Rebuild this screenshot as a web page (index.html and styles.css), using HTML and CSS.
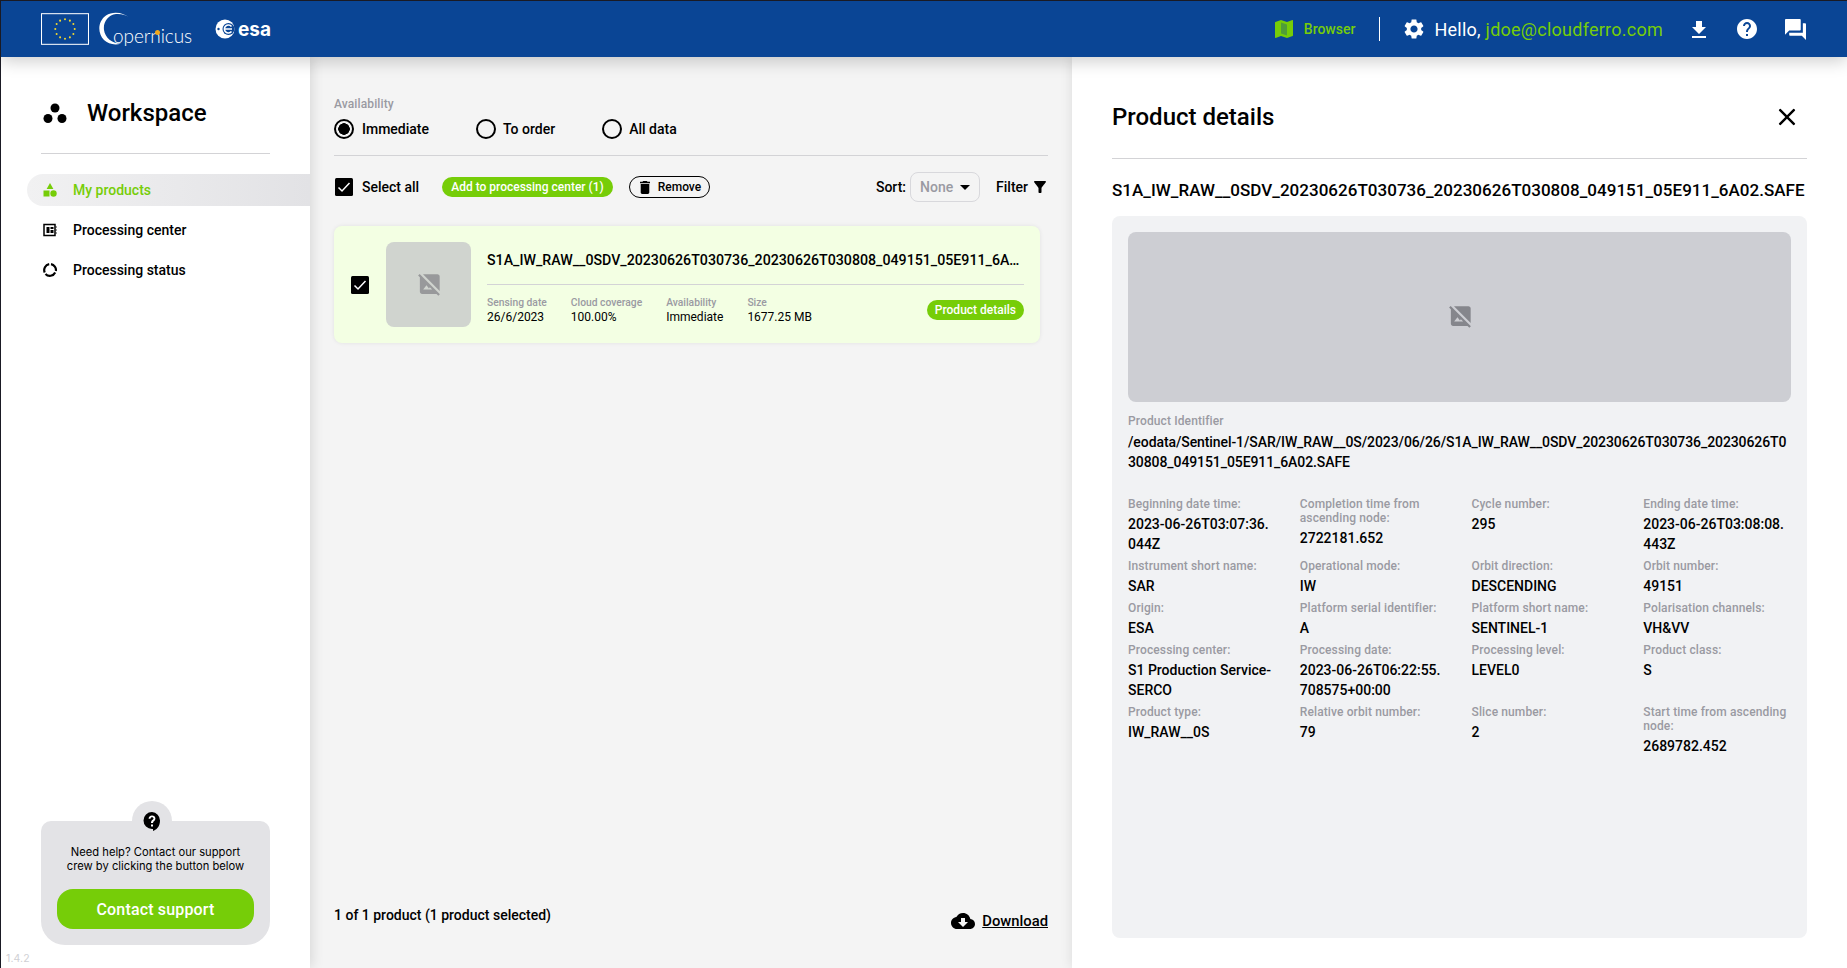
FILE: index.html
```html
<!DOCTYPE html>
<html lang="en">
<head>
  <meta charset="UTF-8">
  <title>Workspace - Product details</title>
  <link rel="stylesheet" href="styles.css">
</head>
<body>

  <!-- top bar -->
  <header class="topbar">
    <div class="logos">
      <svg class="logo-eu" viewBox="0 0 47 31">
        <rect x="0.5" y="0.5" width="46" height="30" fill="#0a4595" stroke="#fff"/>
        <g fill="#f4d92e">
          <circle cx="23.5" cy="6" r="1"/><circle cx="28.3" cy="7.3" r="1"/><circle cx="31.7" cy="10.7" r="1"/>
          <circle cx="33" cy="15.5" r="1"/><circle cx="31.7" cy="20.3" r="1"/><circle cx="28.3" cy="23.7" r="1"/>
          <circle cx="23.5" cy="25" r="1"/><circle cx="18.7" cy="23.7" r="1"/><circle cx="15.3" cy="20.3" r="1"/>
          <circle cx="14" cy="15.5" r="1"/><circle cx="15.3" cy="10.7" r="1"/><circle cx="18.7" cy="7.3" r="1"/>
        </g>
      </svg>
      <div class="logo-copernicus">
        <svg class="copernicus-arc" viewBox="0 0 32 33">
          <path d="M31 6C25 .5 14-1.500 7 3.500-1 9-2 21 5 28c4 4 11 5.500 17 3.500C14 32 6 26 5 18 4 10 9 3 17 2c5-.5 10 1 14 4z" fill="#fff"/>
        </svg>
        <span>opernicus</span>
        <i class="copernicus-dot"></i>
      </div>
      <div class="logo-esa">
        <svg viewBox="0 0 20 20">
          <circle cx="10" cy="10" r="9.500" fill="#fff"/>
          <circle cx="13.500" cy="10" r="6" fill="#0a4595"/>
          <circle cx="3.500" cy="10" r="1.200" fill="#0a4595"/>
          <path d="M9.500 10h7.500M16.500 7.500A4 4 0 1 0 16.500 12.500" fill="none" stroke="#fff" stroke-width="1.600"/>
        </svg>
        <span>esa</span>
      </div>
    </div>
    <div class="top-right">
      <a class="browser-link">
        <svg class="icon-browser" viewBox="3 3 18 18"><path fill="#76cd08" d="M20.500 3l-.16.03L15 5.100 9 3 3.360 4.900c-.21.07-.36.25-.36.480V20.500c0 .28.22.5.5.5l.16-.03L9 18.900l6 2.100 5.640-1.900c.21-.07.36-.25.36-.48V3.500c0-.28-.22-.5-.5-.5z"/><path fill="#0a4595" d="M9 5.500l6 2.100v11l-6-2.100z" opacity=".35"/></svg>
        <span>Browser</span>
      </a>
      <span class="top-sep"></span>
      <svg class="icon-gear" viewBox="2 2 20 20"><path fill="#fff" d="M19.140 12.940c.04-.3.06-.61.06-.94 0-.32-.02-.64-.07-.94l2.030-1.580c.18-.14.23-.41.12-.61l-1.920-3.320c-.12-.22-.37-.29-.59-.22l-2.390.96c-.5-.38-1.030-.7-1.620-.94l-.36-2.540c-.04-.24-.24-.41-.48-.41h-3.840c-.24 0-.43.17-.47.41l-.36 2.540c-.59.24-1.130.57-1.620.94l-2.390-.96c-.22-.08-.47 0-.59.22L2.740 8.870c-.12.21-.08.47.12.61l2.030 1.580c-.05.3-.09.63-.09.94s.02.64.07.94l-2.030 1.580c-.18.14-.23.41-.12.61l1.920 3.320c.12.22.37.29.59.22l2.390-.96c.5.38 1.030.7 1.620.94l.36 2.540c.05.24.24.41.48.41h3.840c.24 0 .44-.17.47-.41l.36-2.540c.59-.24 1.130-.56 1.620-.94l2.390.96c.22.08.47 0 .59-.22l1.920-3.320c.12-.22.07-.47-.12-.61l-2.010-1.580zM12 15.600c-1.980 0-3.600-1.620-3.600-3.600s1.620-3.600 3.600-3.600 3.600 1.620 3.600 3.600-1.620 3.600-3.600 3.600z"/></svg>
      <div class="hello">Hello, <span class="hello-mail">jdoe@cloudferro.com</span></div>
      <svg class="icon-top icon-dl" viewBox="5 3 14 17"><path fill="#fff" d="M19 9h-4V3H9v6H5l7 7 7-7zM5 18v2h14v-2H5z"/></svg>
      <svg class="icon-top icon-help" viewBox="2 2 20 20"><path fill="#fff" d="M12 2C6.480 2 2 6.480 2 12s4.480 10 10 10 10-4.480 10-10S17.520 2 12 2zm1 17h-2v-2h2v2zm2.070-7.750l-.9.92C13.450 12.900 13 13.500 13 15h-2v-.5c0-1.100.45-2.100 1.170-2.830l1.240-1.260c.37-.36.59-.86.59-1.410 0-1.100-.9-2-2-2s-2 .9-2 2H8c0-2.210 1.790-4 4-4s4 1.790 4 4c0 .88-.36 1.680-.93 2.250z"/></svg>
      <svg class="icon-top icon-chat" viewBox="2 2 20 20"><path fill="#fff" d="M21 6h-2v9H6v2c0 .55.45 1 1 1h11l4 4V7c0-.55-.45-1-1-1zm-4 6V3c0-.55-.45-1-1-1H3c-.55 0-1 .45-1 1v14l4-4h10c.55 0 1-.45 1-1z"/></svg>
    </div>
  </header>

  <div class="page">

    <!-- left menu -->
    <aside class="sidebar">
      <div class="side-title">
        <svg class="icon-workspace" viewBox="0 0 24 20">
          <circle cx="12" cy="5" r="4.500"/><circle cx="5" cy="15.500" r="4.500"/><circle cx="19" cy="15.500" r="4.500"/>
        </svg>
        <h2>Workspace</h2>
      </div>
      <nav class="side-nav">
        <a class="nav-item active">
          <svg class="nav-icon" viewBox="0 0 14 14"><path fill="#76cd08" d="M7 0l3.400 6H3.600z"/><rect fill="#76cd08" x="0.500" y="7.500" width="6" height="6"/><circle fill="#76cd08" cx="10.500" cy="10.500" r="3.200"/></svg>
          <span>My products</span>
        </a>
        <a class="nav-item">
          <svg class="nav-icon" viewBox="0 0 14 14"><path d="M1 1.500h11v11H1z" fill="none" stroke="#000" stroke-width="1.500"/><path d="M3.500 4h3v6h-3zM7.500 4h3v2h-3zM7.500 7h3v3h-3z"/><path d="M12.500 4h1.500M12.500 7h1.500M12.500 10h1.500" stroke="#000" stroke-width=".8"/></svg>
          <span>Processing center</span>
        </a>
        <a class="nav-item">
          <svg class="nav-icon" viewBox="0 0 14 14"><path d="M8 1.200A6 6 0 0 1 12.900 8M12.200 9.500A6 6 0 0 1 2.500 11M1.700 9.500A6 6 0 0 1 6.200 1.200" fill="none" stroke="#000" stroke-width="2.200"/></svg>
          <span>Processing status</span>
        </a>
      </nav>
      <div class="help-box">
        <div class="help-bump">
          <svg viewBox="0 0 18 19"><path d="M9 0a8.500 8.500 0 0 0 0 17h1v2c3-1 7-4 7-10.500A8.500 8.500 0 0 0 9 0z"/><path fill="#fff" d="M8 12.500h2v2H8zM9 3.500c-2 0-3.400 1.300-3.400 3.200h1.900c0-.9.6-1.500 1.500-1.500s1.500.6 1.500 1.300c0 1.300-2.500 1.500-2.500 4.500h2c0-2 2.400-2.300 2.400-4.600 0-1.700-1.400-2.900-3.400-2.900z"/></svg>
        </div>
        <p>Need help? Contact our support crew by clicking the button below</p>
        <button class="contact-btn">Contact support</button>
      </div>
      <div class="version">1.4.2</div>
    </aside>

    <!-- product list -->
    <main class="main">
      <div class="field-label">Availability</div>
      <div class="radios">
        <label class="radio checked"><i></i>Immediate</label>
        <label class="radio"><i></i>To order</label>
        <label class="radio"><i></i>All data</label>
      </div>

      <div class="toolbar">
        <svg class="check check-all" viewBox="0 0 18 18"><rect width="18" height="18" rx="1.500"/><path d="M3.500 9.500l3.500 3.500 7.500-8" fill="none" stroke="#fff" stroke-width="1.500"/></svg>
        <span class="select-all">Select all</span>
        <button class="pill pill-add">Add to processing center (1)</button>
        <button class="pill pill-remove">
          <svg viewBox="5 3 14 18"><path d="M6 19c0 1.100.9 2 2 2h8c1.100 0 2-.9 2-2V7H6v12zM19 4h-3.500l-1-1h-5l-1 1H5v2h14V4z"/></svg>
          Remove
        </button>
        <div class="sort">
          <span>Sort:</span>
          <div class="sort-select">None <i class="caret"></i></div>
          <span class="filter">Filter
            <svg viewBox="4 4 16 16"><path d="M4.250 5.610C6.270 8.200 10 13 10 13v6c0 .55.45 1 1 1h2c.55 0 1-.45 1-1v-6s3.720-4.800 5.740-7.390c.51-.66.04-1.610-.79-1.610H5.040c-.83 0-1.300.95-.79 1.610z"/></svg>
          </span>
        </div>
      </div>

      <div class="product-card">
        <svg class="check check-card" viewBox="0 0 18 18"><rect width="18" height="18" rx="1.500"/><path d="M3.500 9.500l3.500 3.500 7.500-8" fill="none" stroke="#fff" stroke-width="1.500"/></svg>
        <div class="thumb">
          <svg viewBox="1.300 2.800 20 20"><path d="M21 5c0-1.100-.9-2-2-2H5.830L21 18.170V5zM2.810 2.810 1.390 4.220 3 5.830V19c0 1.100.9 2 2 2h13.170l1.610 1.610 1.410-1.410L2.810 2.810zM6 17l3-4 2.250 3 .82-1.100 2.100 2.100H6z"/></svg>
        </div>
        <div class="product-body">
          <div class="product-name">S1A_IW_RAW__0SDV_20230626T030736_20230626T030808_049151_05E911_6A02.SAFE</div>
          <div class="product-meta">
            <div class="meta"><span>Sensing date</span>26/6/2023</div>
            <div class="meta"><span>Cloud coverage</span>100.00%</div>
            <div class="meta"><span>Availability</span>Immediate</div>
            <div class="meta"><span>Size</span>1677.25 MB</div>
            <button class="pill pill-details">Product details</button>
          </div>
        </div>
      </div>

      <div class="list-footer">
        <span class="count">1 of 1 product (1 product selected)</span>
        <a class="download">
          <svg viewBox="0 4 24 16"><path d="M19.350 10.040C18.670 6.590 15.640 4 12 4 9.110 4 6.600 5.640 5.350 8.040 2.340 8.360 0 10.910 0 14c0 3.310 2.690 6 6 6h13c2.760 0 5-2.240 5-5 0-2.640-2.050-4.780-4.650-4.960zM17 13l-5 5-5-5h3V9h4v4h3z"/></svg>
          <span>Download</span>
        </a>
      </div>
    </main>

    <!-- details panel -->
    <section class="details">
      <div class="details-head">
        <h2>Product details</h2>
        <svg class="icon-close" viewBox="5 5 14 14"><path d="M19 6.410L17.590 5 12 10.590 6.410 5 5 6.410 10.590 12 5 17.590 6.410 19 12 13.410 17.590 19 19 17.590 13.410 12z"/></svg>
      </div>
      <div class="details-name">S1A_IW_RAW__0SDV_20230626T030736_20230626T030808_049151_05E911_6A02.SAFE</div>
      <div class="details-card">
        <div class="quicklook">
          <svg viewBox="1.300 2.800 20 20"><path d="M21 5c0-1.100-.9-2-2-2H5.830L21 18.170V5zM2.810 2.810 1.390 4.220 3 5.830V19c0 1.100.9 2 2 2h13.170l1.610 1.610 1.410-1.410L2.810 2.810zM6 17l3-4 2.250 3 .82-1.100 2.100 2.100H6z"/></svg>
        </div>
        <div class="attr attr-id">
          <span>Product Identifier</span>
          <b>/eodata/Sentinel-1/SAR/IW_RAW__0S/2023/06/26/S1A_IW_RAW__0SDV_20230626T030736_20230626T030808_049151_05E911_6A02.SAFE</b>
        </div>
        <div class="attr-grid">
          <div class="attr"><span>Beginning date time:</span><b>2023-06-26T03:07:36.044Z</b></div>
          <div class="attr"><span>Completion time from ascending node:</span><b>2722181.652</b></div>
          <div class="attr"><span>Cycle number:</span><b>295</b></div>
          <div class="attr"><span>Ending date time:</span><b>2023-06-26T03:08:08.443Z</b></div>
          <div class="attr"><span>Instrument short name:</span><b>SAR</b></div>
          <div class="attr"><span>Operational mode:</span><b>IW</b></div>
          <div class="attr"><span>Orbit direction:</span><b>DESCENDING</b></div>
          <div class="attr"><span>Orbit number:</span><b>49151</b></div>
          <div class="attr"><span>Origin:</span><b>ESA</b></div>
          <div class="attr"><span>Platform serial identifier:</span><b>A</b></div>
          <div class="attr"><span>Platform short name:</span><b>SENTINEL-1</b></div>
          <div class="attr"><span>Polarisation channels:</span><b>VH&amp;VV</b></div>
          <div class="attr"><span>Processing center:</span><b>S1 Production Service-SERCO</b></div>
          <div class="attr"><span>Processing date:</span><b>2023-06-26T06:22:55.708575+00:00</b></div>
          <div class="attr"><span>Processing level:</span><b>LEVEL0</b></div>
          <div class="attr"><span>Product class:</span><b>S</b></div>
          <div class="attr"><span>Product type:</span><b>IW_RAW__0S</b></div>
          <div class="attr"><span>Relative orbit number:</span><b>79</b></div>
          <div class="attr"><span>Slice number:</span><b>2</b></div>
          <div class="attr"><span>Start time from ascending node:</span><b>2689782.452</b></div>
        </div>
      </div>
    </section>
  </div>

</body>
</html>
```

FILE: styles.css
```css
* {
  box-sizing: border-box;
}

body {
  margin: 0;
  height: 968px;
  overflow: hidden;
  display: flex;
  flex-direction: column;
  font-family: 'Roboto', sans-serif;
  font-size: 14px;
  color: #000;
  background: #fff;
  border-top: 1px solid #1a1a24;
  border-left: 1px solid #1a1a24;
}

/* top bar */
.topbar {
  position: relative;
  z-index: 3;
  height: 56px;
  flex: none;
  display: flex;
  align-items: center;
  justify-content: space-between;
  background: #0a4595;
  box-shadow: 0 4px 16px rgba(0, 0, 0, 0.2);
  color: #fff;
}
.logos {
  display: flex;
  align-items: center;
  padding-left: 40px;
}
.logo-eu {
  width: 48px;
  height: 32px;
}
.logo-copernicus {
  position: relative;
  width: 92px;
  height: 34px;
  margin-left: 10px;
}
.copernicus-arc {
  position: absolute;
  left: 0;
  top: 0;
  width: 32px;
  height: 33px;
}
.logo-copernicus span {
  position: absolute;
  left: 14px;
  top: 12px;
  font-family: 'Lato', sans-serif;
  font-size: 19px;
  font-weight: 300;
  letter-spacing: -0.1px;
}
.copernicus-dot {
  position: absolute;
  left: 56px;
  top: 18px;
  width: 5px;
  height: 5px;
  border-radius: 50%;
  background: #f2a71b;
}
.logo-esa {
  display: flex;
  align-items: center;
  margin-left: 24px;
}
.logo-esa svg {
  width: 20px;
  height: 20px;
}
.logo-esa span {
  margin-left: 3px;
  font-family: 'Inter', sans-serif;
  font-size: 19px;
  font-weight: 700;
}
.top-right {
  display: flex;
  align-items: center;
  padding-right: 41px;
}
.browser-link {
  display: flex;
  align-items: center;
  color: #76cd08;
  font-weight: 500;
}
.icon-browser {
  width: 18px;
  height: 18px;
  margin-right: 11px;
}
.top-sep {
  width: 1px;
  height: 24px;
  margin: 0 24px;
  background: #fff;
}
.icon-gear {
  width: 20px;
  height: 20px;
  margin-right: 10px;
}
.hello {
  margin-top: 1px;
  font-size: 18px;
  letter-spacing: 0.25px;
}
.hello-mail {
  color: #76cd08;
}
.icon-dl {
  width: 14px;
  height: 17px;
  margin-left: 29px;
}
.icon-help {
  width: 20px;
  height: 20px;
  margin-left: 31px;
}
.icon-chat {
  width: 21px;
  height: 21px;
  margin-left: 28px;
}

/* columns */
.page {
  flex: 1;
  display: flex;
  min-height: 0;
}

/* left menu */
.sidebar {
  position: relative;
  z-index: 2;
  width: 309px;
  flex: none;
  display: flex;
  flex-direction: column;
  padding: 36px 0 23px 26px;
  background: #fff;
  box-shadow: 2px 0 12px rgba(0, 0, 0, 0.12);
}
.side-title {
  display: flex;
  align-items: center;
  width: 229px;
  margin-left: 14px;
  padding: 0 0 20px 2px;
  border-bottom: 1px solid #d3d3d6;
}
.icon-workspace {
  width: 24px;
  height: 20px;
  margin-right: 20px;
}
.side-title h2 {
  margin: 0;
  font-size: 24px;
  font-weight: 500;
  line-height: 40px;
}
.side-nav {
  display: flex;
  flex-direction: column;
  gap: 8px;
  margin-top: 20px;
}
.nav-item {
  display: flex;
  align-items: center;
  height: 32px;
  padding-left: 16px;
  font-weight: 500;
  border-radius: 16px 0 0 16px;
}
.nav-item.active {
  color: #76cd08;
  background: linear-gradient(to right, #f1f1f2, #e2e2e5);
}
.nav-icon {
  width: 14px;
  height: 14px;
  margin-right: 16px;
}
.help-box {
  position: relative;
  width: 229px;
  margin: auto 0 0 14px;
  padding: 24px 16px 16px;
  border-radius: 10px 10px 24px 24px;
  background: #e3e3e6;
}
.help-bump {
  position: absolute;
  top: -20px;
  left: 91px;
  width: 40px;
  height: 40px;
  display: flex;
  align-items: center;
  justify-content: center;
  border-radius: 50%;
  background: #e3e3e6;
}
.help-bump svg {
  width: 18px;
  height: 19px;
}
.help-box p {
  margin: 0 0 16px;
  padding: 0 8px;
  font-family: 'Inter', sans-serif;
  font-size: 11.200px;
  line-height: 14px;
  text-align: center;
}
.contact-btn {
  width: 197px;
  height: 40px;
  border: none;
  border-radius: 16px;
  background: #76cd08;
  color: #fff;
  font-family: 'Roboto', sans-serif;
  font-size: 16px;
  font-weight: 500;
  letter-spacing: 0.01em;
}
.version {
  position: absolute;
  left: 5px;
  bottom: 3px;
  font-family: 'Inter', sans-serif;
  font-size: 10.500px;
  letter-spacing: 0.01em;
  color: #d0d0d4;
}

/* product list */
.main {
  width: 762px;
  flex: none;
  display: flex;
  flex-direction: column;
  padding: 40px 24px 0 24px;
  background: #f4f4f4;
}
.field-label {
  font-size: 12px;
  font-weight: 500;
  letter-spacing: 0.01em;
  line-height: 14px;
  color: #9a9aa2;
}
.radios {
  display: flex;
  height: 45px;
  padding-top: 4px;
  border-bottom: 1px solid #d3d3d6;
}
.radio {
  display: flex;
  align-items: center;
  height: 28px;
  margin-right: 47px;
  font-weight: 500;
}
.radio i {
  width: 20px;
  height: 20px;
  margin-right: 7px;
  border: 2px solid #000;
  border-radius: 50%;
}
.radio.checked i {
  margin-right: 8px;
  background: radial-gradient(circle, #000 5.500px, transparent 6px);
}
.toolbar {
  display: flex;
  align-items: center;
  height: 46px;
  margin-top: 8px;
}
.check {
  display: block;
  flex: none;
}
.check-all {
  width: 18px;
  height: 18px;
  margin-left: 1px;
}
.select-all {
  margin-left: 9px;
  font-weight: 500;
}
.pill {
  border-radius: 12px;
  font-family: 'Roboto', sans-serif;
  font-weight: 500;
  font-size: 12px;
}
.pill-add {
  height: 20px;
  margin-left: 23px;
  padding: 0 9px;
  border: none;
  background: #76cd08;
  color: #fff;
}
.pill-remove {
  display: flex;
  align-items: center;
  height: 22px;
  margin-left: 16px;
  padding: 0 8px 0 10px;
  border: 1px solid #000;
  background: transparent;
  color: #000;
}
.pill-remove svg {
  width: 10px;
  height: 13px;
  margin-right: 8px;
}
.sort {
  display: flex;
  align-items: center;
  margin-left: auto;
  font-weight: 500;
}
.sort-select {
  display: flex;
  align-items: center;
  width: 70px;
  height: 30px;
  margin: 0 16px 0 4px;
  padding-left: 9px;
  border: 1px solid #d8d8dc;
  border-radius: 8px;
  color: #9a9aa2;
}
.caret {
  margin-left: 7px;
  border-style: solid;
  border-width: 5px 5px 0;
  border-color: #000 transparent transparent;
}
.filter {
  display: flex;
  align-items: center;
  gap: 6px;
  margin-right: 2px;
}
.filter svg {
  width: 12px;
  height: 12px;
}

.product-card {
  display: flex;
  align-items: center;
  width: 706px;
  height: 117px;
  margin-top: 16px;
  padding: 0 16px 0 17px;
  border-radius: 8px;
  background: #f3ffe3;
  box-shadow: 0 0 4px rgba(0, 0, 0, 0.08);
}
.check-card {
  width: 18px;
  height: 18px;
}
.thumb {
  width: 85px;
  height: 85px;
  flex: none;
  display: flex;
  align-items: center;
  justify-content: center;
  margin: 0 16px 0 17px;
  border-radius: 8px;
  background: #d0d4cf;
}
.thumb svg {
  width: 22px;
  height: 22px;
  fill: #98999b;
}
.product-body {
  flex: 1;
  min-width: 0;
}
.product-name {
  height: 43px;
  padding-top: 8px;
  border-bottom: 1px solid #d3d3d6;
  font-size: 14.200px;
  font-weight: 500;
  line-height: 20px;
  white-space: nowrap;
  overflow: hidden;
  text-overflow: ellipsis;
}
.product-meta {
  display: flex;
  align-items: center;
  height: 34px;
  margin-top: 8px;
  font-size: 12px;
}
.meta {
  margin-right: 24px;
  line-height: 15px;
}
.meta span {
  display: block;
  font-size: 10.300px;
  font-weight: 500;
  line-height: 15px;
  color: #9a9aa2;
}
.pill-details {
  height: 20px;
  margin-left: auto;
  padding: 0 8px;
  border: none;
  background: #76cd08;
  color: #fff;
  font-size: 12px;
}

.list-footer {
  display: flex;
  justify-content: space-between;
  margin-top: auto;
  height: 61px;
  font-weight: 500;
}
.count {
  line-height: 16px;
}
.download {
  display: flex;
  align-items: center;
  align-self: flex-start;
  height: 17px;
  margin-top: 5px;
}
.download svg {
  width: 24px;
  height: 16px;
  margin-right: 7px;
}
.download span {
  font-size: 14.800px;
  text-decoration: underline;
}

/* details panel */
.details {
  flex: 1;
  min-width: 0;
  display: flex;
  flex-direction: column;
  padding: 0 40px 30px;
  background: #fff;
  position: relative;
  z-index: 1;
  box-shadow: -2px 0 10px rgba(0, 0, 0, 0.08);
}
.details-head {
  display: flex;
  align-items: center;
  justify-content: space-between;
  height: 102px;
  padding: 18px 13px 0 0;
  border-bottom: 1px solid #d3d3d6;
}
.details-head h2 {
  margin: 0;
  font-size: 24px;
  font-weight: 500;
}
.icon-close {
  width: 14px;
  height: 14px;
  transform: scale(1.2);
}
.details-name {
  margin-top: 21px;
  font-size: 17px;
  font-weight: 500;
  letter-spacing: 0.03px;
  line-height: 20px;
  white-space: nowrap;
}
.details-card {
  flex: 1;
  margin-top: 16px;
  padding: 16px;
  border-radius: 8px;
  background: #f1f2f4;
}
.quicklook {
  height: 170px;
  display: flex;
  align-items: center;
  justify-content: center;
  border-radius: 8px;
  background: #cdced3;
}
.quicklook svg {
  width: 22px;
  height: 22px;
  fill: #85868c;
}
.attr span {
  display: block;
  font-size: 12px;
  font-weight: 500;
  letter-spacing: 0.01em;
  line-height: 14px;
  color: #9a9aa2;
}
.attr b {
  display: block;
  font-size: 14px;
  font-weight: 500;
  line-height: 20px;
  word-break: break-all;
}
.attr-id {
  margin-top: 12px;
}
.attr-id b {
  margin-top: 4px;
  letter-spacing: -0.09px;
}
.attr-grid {
  display: grid;
  grid-template-columns: repeat(4, 1fr);
  gap: 5px 24px;
  margin-top: 25px;
}
.attr-grid b {
  margin-top: 3px;
}
```
